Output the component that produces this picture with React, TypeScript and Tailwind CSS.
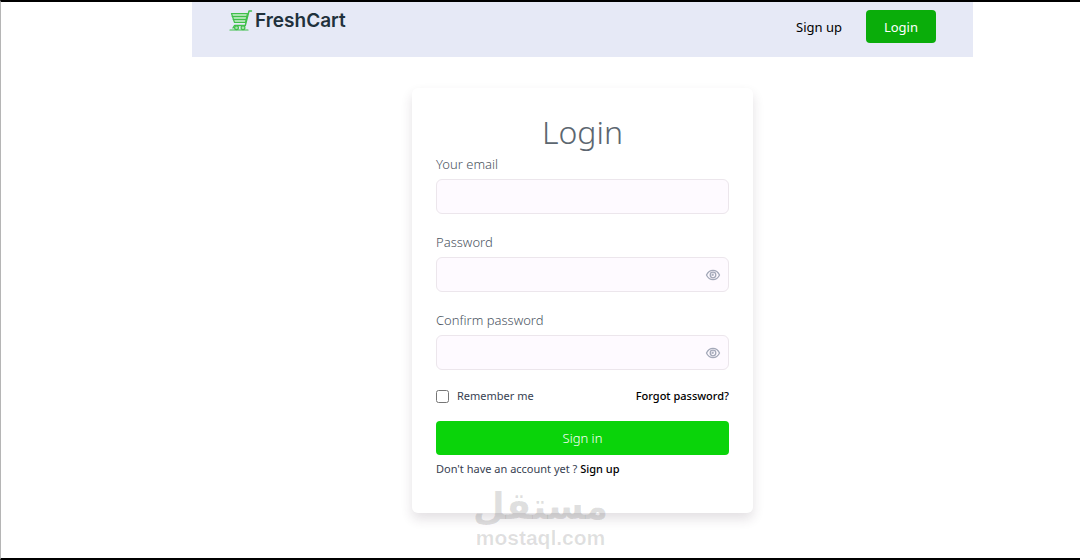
import { useState } from "react";

function CartLogo() {
  return (
    <svg
      className="h-[22px] w-6"
      viewBox="0 0 24 22"
      fill="none"
      stroke="#3fbf4a"
      strokeWidth="1.2"
      strokeLinecap="round"
      strokeLinejoin="round"
      aria-hidden="true"
    >
      <path d="M2.500 3.500H18.500L16.500 12.500H5.500Z" fill="#a9e4ae" />
      <path d="M3.200 6.500H17.600M4.200 9.500H17" />
      <path d="M22.500 1H20L16.300 15.500H5.500L4 18" strokeWidth="1.4" />
      <path d="M1 20H19" />
      <circle cx="7.500" cy="17.700" r="1.900" fill="#a9e4ae" />
      <circle cx="14" cy="17.700" r="1.900" fill="#a9e4ae" />
    </svg>
  );
}

function EyeIcon() {
  return (
    <svg className="h-4 w-4" viewBox="0 0 16 16" fill="none" stroke="#a3a8b8" strokeWidth="1.3" aria-hidden="true">
      <path d="M1.500 8C3 4.800 5.300 3.300 8 3.300S13 4.800 14.500 8C13 11.200 10.700 12.700 8 12.700S3 11.200 1.500 8Z" />
      <circle cx="8" cy="8" r="2.800" />
      <path d="M8 6.500V8H6.500" />
    </svg>
  );
}

const inputStyle =
  "h-[35px] w-full rounded-md border border-[#ece6ec] bg-[#fefaff] px-3 text-[13px] text-gray-800 outline-none focus:border-gray-400";

function PasswordField({ id, label }: { id: string; label: string }) {
  const [visible, setVisible] = useState(false);

  return (
    <div className="flex flex-col gap-[5px]">
      <label htmlFor={id} className="text-[13px] leading-[19px] font-light text-[#4b555f]">
        {label}
      </label>
      <div className="relative">
        <input id={id} type={visible ? "text" : "password"} className={`${inputStyle} pr-9`} />
        <button
          type="button"
          aria-label={visible ? "Hide password" : "Show password"}
          onClick={() => setVisible(!visible)}
          className="absolute inset-y-0 right-2 flex items-center"
        >
          <EyeIcon />
        </button>
      </div>
    </div>
  );
}

export default function App() {
  return (
    <div className="relative min-h-screen border-y-2 border-l border-y-black border-l-[#b5b5b5] bg-white pr-[107px] pl-[191px] font-['Noto_Sans','Open_Sans',sans-serif]">
      <header className="flex items-start justify-between bg-[#e6e9f6] px-[37px] pt-2 pb-[14px]">
        <a href="#" className="flex items-center gap-[2px] font-['Inter',sans-serif] text-[19px] leading-[22px] font-semibold text-[#21313c]">
          <CartLogo />
          FreshCart
        </a>
        <nav className="flex items-center gap-6 text-[13px] leading-[19px]">
          <a href="#signup" className="pt-2 pb-[6px] text-black">
            Sign up
          </a>
          <a href="#login" className="rounded bg-[#0aad0a] px-[18px] pt-2 pb-[6px] text-white">
            Login
          </a>
        </nav>
      </header>

      <main className="flex justify-center pt-[31px] pb-8">
        <form
          className="w-full max-w-[341px] rounded-md bg-white px-6 pt-6 pb-[34px] shadow-[0_6px_12px_rgba(60,35,60,0.14)]"
          onSubmit={(e) => e.preventDefault()}
        >
          <h1 className="mb-[3px] text-center text-[32px] leading-10 font-light text-[#5c6670]">Login</h1>

          <div className="flex flex-col gap-[19px]">
            <div className="flex flex-col gap-[5px]">
              <label htmlFor="email" className="text-[13px] leading-[19px] font-light text-[#4b555f]">
                Your email
              </label>
              <input id="email" type="email" className={inputStyle} />
            </div>
            <PasswordField id="password" label="Password" />
            <PasswordField id="confirm-password" label="Confirm password" />
          </div>

          <div className="mt-4 flex items-center justify-between text-[11px] leading-5">
            <label className="flex items-center gap-2 text-[#374151]">
              <input type="checkbox" className="h-[13px] w-[13px]" />
              Remember me
            </label>
            <a href="#forgot" className="font-medium text-black">
              Forgot password?
            </a>
          </div>

          <button
            type="submit"
            className="mt-[15px] h-[34px] w-full rounded bg-[#0ad40a] pt-[2px] text-[13px] font-light text-white"
          >
            Sign in
          </button>
          <p className="mt-1 text-[11px] leading-5 text-[#374151]">
            Don't have an account yet ?{" "}
            <a href="#signup" className="font-medium text-black">
              Sign up
            </a>
          </p>
        </form>
      </main>

      <div className="pointer-events-none absolute inset-x-0 bottom-2 flex flex-col items-center text-black/12">
        <span lang="ar" dir="rtl" className="font-['DejaVu_Sans',sans-serif] text-[37px] leading-[38px] font-bold">
          مستقل
        </span>
        <span className="font-['Liberation_Sans',sans-serif] text-[21px] leading-6 font-bold">mostaql.com</span>
      </div>
    </div>
  );
}
